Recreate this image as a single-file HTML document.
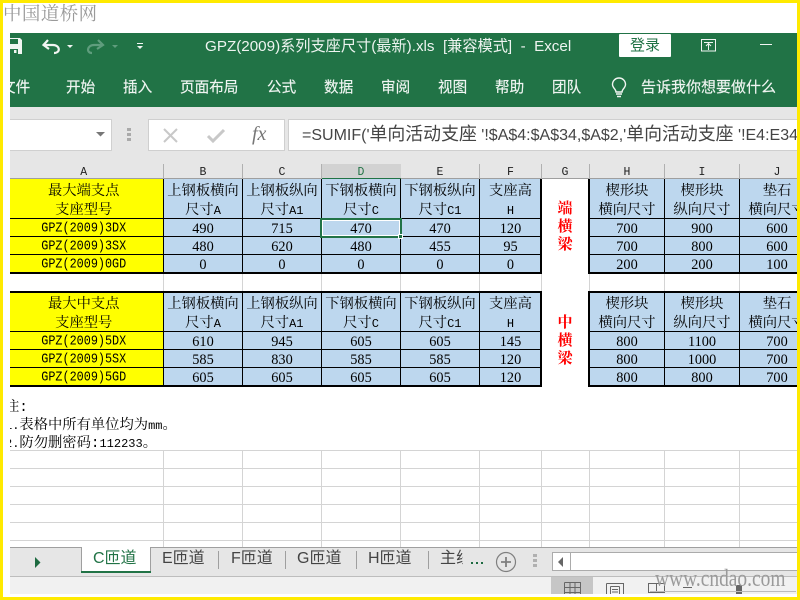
<!DOCTYPE html>
<html lang="zh"><head><meta charset="utf-8"><title>GPZ</title>
<style>
html,body{margin:0;padding:0;background:#fff}
#root{position:relative;width:800px;height:600px;overflow:hidden;background:#fff}
.b{position:absolute}
#clip{position:absolute;left:10px;top:33px;width:787px;height:561px;overflow:hidden;background:#fff}
#p{position:absolute;left:-10px;top:-33px;width:800px;height:600px}
.s{font-family:"Liberation Sans","Noto Sans CJK SC",sans-serif;white-space:pre;position:absolute}
.t{position:absolute;font-family:"Liberation Mono","Noto Serif CJK SC",serif;color:#000;text-align:center;white-space:nowrap}
.t i{font-style:normal;font-size:12px}
.h{font-size:14.3px;line-height:18.5px}
.n{font:14.3px/18px "Liberation Serif",serif;height:18px;padding-top:1px}
.n.a{font:11.8px/16px "Liberation Mono",serif;transform:scaleY(1.15);padding-top:1px}
.rb{color:#f0f5f2;font-size:14.6px;top:77px;line-height:22px;-webkit-text-stroke:.15px #f0f5f2}
.a{left:4px;width:159.5px}.c2{left:164px;width:78px}.c3{left:243px;width:78px}.c4{left:322px;width:78px}.c5{left:401px;width:78px}
.c6{left:480px;width:61px}.c7{left:542px;width:46px}.c8{left:590px;width:74px}.c9{left:665px;width:74px}.c10{left:740px;width:74px}
.hd{position:absolute;top:164px;height:15px;line-height:17px;font:11.5px/17px "Liberation Mono",serif;color:#222;text-align:center}
.tab{font-size:16px;color:#444;top:547px;line-height:24px}
.g{background:#d4d4d4;position:absolute}
.k{background:#000;position:absolute}
.f{font-size:17.9px}
.red{font-size:15px;line-height:18px;font-weight:bold;color:#f00}
</style></head>
<body><div id="root">

<div class="s" style="left:3px;top:1px;font-family:'Noto Serif CJK SC',serif;font-size:18.5px;letter-spacing:.4px;line-height:24px;color:#9a9a9a">中国道桥网</div>

<div id="clip"><div id="p">
<!-- title & ribbon -->
<div class="b" style="left:0;top:33px;width:800px;height:74px;background:#217346"></div>
<svg class="b" style="left:0;top:33px" width="170" height="32" viewBox="0 33 170 32">
<path d="M4 38H20L22 40V54H4Z" fill="#f1f5f2"/><rect x="9" y="39" width="9" height="5" fill="#217346"/><rect x="9" y="49" width="9" height="5" fill="#217346"/><rect x="14" y="50" width="2.5" height="3" fill="#f1f5f2"/>
<path d="M48 40 L43.5 45 L49 49" fill="none" stroke="#f1f5f2" stroke-width="2.2"/><path d="M44 45 H53 C60 45 61 53 54 53" fill="none" stroke="#f1f5f2" stroke-width="2.2"/>
<path d="M67 45H73L70 48Z" fill="#f1f5f2"/>
<path d="M98 40 L103 45 L97 49" fill="none" stroke="#5f9d7d" stroke-width="2.2"/><path d="M102 45 H94 C87 45 86 53 92 53" fill="none" stroke="#5f9d7d" stroke-width="2.2"/>
<path d="M112 45H118L115 48Z" fill="#5f9d7d"/>
<rect x="137" y="43" width="6" height="1" fill="#f1f5f2"/><path d="M137 46H143L140 49Z" fill="#f1f5f2"/>
</svg>
<div class="s" style="left:205px;top:36px;font-size:15.2px;line-height:22px;color:#eef4f0">GPZ(2009)系列支座尺寸(最新).xls  [兼容模式]  -  Excel</div>
<div class="b" style="left:619px;top:34px;width:52px;height:23px;background:#fff;border-radius:1px"></div>
<div class="s" style="left:630px;top:35px;font-size:15px;line-height:22px;color:#217346">登录</div>
<svg class="b" style="left:700px;top:38px" width="18" height="15"><rect x="1.5" y="1.5" width="14" height="11.5" fill="none" stroke="#f1f5f2"/><path d="M4 4.5H13M8.5 12V5.5M6 8L8.5 5.5L11 8" fill="none" stroke="#f1f5f2"/></svg>
<div class="b" style="left:760px;top:44px;width:12px;height:1px;background:#f1f5f2"></div>

<div class="s rb" style="left:1px">文件</div>
<div class="s rb" style="left:66px">开始</div>
<div class="s rb" style="left:123px">插入</div>
<div class="s rb" style="left:180px">页面布局</div>
<div class="s rb" style="left:267px">公式</div>
<div class="s rb" style="left:324px">数据</div>
<div class="s rb" style="left:381px">审阅</div>
<div class="s rb" style="left:438px">视图</div>
<div class="s rb" style="left:495px">帮助</div>
<div class="s rb" style="left:552px">团队</div>
<svg class="b" style="left:610px;top:77px" width="18" height="22"><path d="M6 15C6 12 2.5 11 2.5 7.5A6.5 6.5 0 0 1 15.5 7.5C15.5 11 12 12 12 15Z" fill="none" stroke="#f1f5f2" stroke-width="1.4"/><path d="M6 17H12M7 19.5H11" stroke="#f1f5f2" stroke-width="1.6"/></svg>
<div class="s rb" style="left:641px;top:77px;font-size:15px">告诉我你想要做什么</div>

<!-- formula bar -->
<div class="b" style="left:0;top:107px;width:800px;height:57px;background:#e6e6e6"></div>
<div class="b" style="left:0;top:119px;width:110px;height:30px;background:#fff;border:1px solid #d0d0d0"></div>
<svg class="b" style="left:95px;top:130px" width="12" height="8"><path d="M1 2H10L5.500 6.500Z" fill="#777"/></svg>
<div class="b" style="left:127px;top:128px;width:4px;height:3px;background:#aaa"></div>
<div class="b" style="left:127px;top:133px;width:4px;height:3px;background:#aaa"></div>
<div class="b" style="left:127px;top:138px;width:4px;height:3px;background:#aaa"></div>
<div class="b" style="left:148px;top:119px;width:135px;height:30px;background:#fff;border:1px solid #cfcfcf"></div>
<svg class="b" style="left:160px;top:125px" width="120" height="20"><path d="M4 4L17 17M17 4L4 17" stroke="#c8c8c8" stroke-width="2"/><path d="M48 11L53 16L64 5" fill="none" stroke="#c8c8c8" stroke-width="3"/></svg>
<div class="s" style="left:252px;top:122px;font:italic 20px/24px 'Liberation Serif',serif;color:#777">fx</div>
<div class="b" style="left:288px;top:119px;width:520px;height:30px;background:#fff;border:1px solid #cfcfcf"></div>
<div class="s" style="left:302px;top:123px;font-size:16px;line-height:22px;color:#444">=SUMIF('<span class="f">单向活动支座</span> '!$A$4:$A$34,$A$2,'<span class="f">单向活动支座</span> '!E4:E34</div>

<!-- column headers -->
<div class="b" style="left:0;top:164px;width:800px;height:15px;background:#e6e6e6"></div>
<div class="b" style="left:322px;top:164px;width:79px;height:15px;background:#d2d2d2"></div>
<div class="b" style="left:0;top:178px;width:800px;height:1px;background:#9f9f9f"></div>
<div class="b" style="left:322px;top:178px;width:79px;height:1px;background:#217346"></div>
<div class="b" style="left:163px;top:164px;width:1px;height:15px;background:#b0b0b0"></div>
<div class="b" style="left:242px;top:164px;width:1px;height:15px;background:#b0b0b0"></div>
<div class="b" style="left:321px;top:164px;width:1px;height:15px;background:#b0b0b0"></div>
<div class="b" style="left:479px;top:164px;width:1px;height:15px;background:#b0b0b0"></div>
<div class="b" style="left:541px;top:164px;width:1px;height:15px;background:#b0b0b0"></div>
<div class="b" style="left:589px;top:164px;width:1px;height:15px;background:#b0b0b0"></div>
<div class="b" style="left:664px;top:164px;width:1px;height:15px;background:#b0b0b0"></div>
<div class="b" style="left:739px;top:164px;width:1px;height:15px;background:#b0b0b0"></div>
<div class="hd a">A</div><div class="hd c2">B</div><div class="hd c3">C</div><div class="hd c4" style="color:#217346">D</div><div class="hd c5">E</div><div class="hd c6">F</div><div class="hd c7">G</div><div class="hd c8">H</div><div class="hd c9">I</div><div class="hd c10">J</div>

<!-- gridlines -->
<div class="g" style="left:163px;top:273px;width:1px;height:19px"></div><div class="g" style="left:242px;top:273px;width:1px;height:19px"></div><div class="g" style="left:321px;top:273px;width:1px;height:19px"></div><div class="g" style="left:400px;top:273px;width:1px;height:19px"></div><div class="g" style="left:479px;top:273px;width:1px;height:19px"></div><div class="g" style="left:541px;top:273px;width:1px;height:19px"></div><div class="g" style="left:589px;top:273px;width:1px;height:19px"></div><div class="g" style="left:664px;top:273px;width:1px;height:19px"></div><div class="g" style="left:739px;top:273px;width:1px;height:19px"></div>
<div class="g" style="left:163px;top:450px;width:1px;height:97px"></div><div class="g" style="left:242px;top:450px;width:1px;height:97px"></div><div class="g" style="left:321px;top:450px;width:1px;height:97px"></div><div class="g" style="left:400px;top:450px;width:1px;height:97px"></div><div class="g" style="left:479px;top:450px;width:1px;height:97px"></div><div class="g" style="left:541px;top:450px;width:1px;height:97px"></div><div class="g" style="left:589px;top:450px;width:1px;height:97px"></div><div class="g" style="left:664px;top:450px;width:1px;height:97px"></div><div class="g" style="left:739px;top:450px;width:1px;height:97px"></div>
<div class="g" style="left:0;top:450px;width:800px;height:1px"></div>
<div class="g" style="left:0;top:468px;width:800px;height:1px"></div>
<div class="g" style="left:0;top:486px;width:800px;height:1px"></div>
<div class="g" style="left:0;top:504px;width:800px;height:1px"></div>
<div class="g" style="left:0;top:522px;width:800px;height:1px"></div>
<div class="g" style="left:0;top:540px;width:800px;height:1px"></div>

<!-- fills -->
<div class="b" style="left:0;top:179px;width:163px;height:93px;background:#ff0"></div>
<div class="b" style="left:163px;top:179px;width:378px;height:93px;background:#bdd7ee"></div>
<div class="b" style="left:590px;top:179px;width:220px;height:93px;background:#bdd7ee"></div>
<div class="b" style="left:0;top:292px;width:163px;height:93px;background:#ff0"></div>
<div class="b" style="left:163px;top:292px;width:378px;height:93px;background:#bdd7ee"></div>
<div class="b" style="left:590px;top:292px;width:220px;height:93px;background:#bdd7ee"></div>

<!-- black lines table 1 -->
<div class="k" style="left:0;top:218px;width:541px;height:1px"></div><div class="k" style="left:589px;top:218px;width:220px;height:1px"></div>
<div class="k" style="left:0;top:236px;width:541px;height:1px"></div><div class="k" style="left:589px;top:236px;width:220px;height:1px"></div>
<div class="k" style="left:0;top:254px;width:541px;height:1px"></div><div class="k" style="left:589px;top:254px;width:220px;height:1px"></div>
<div class="k" style="left:0;top:272px;width:542px;height:2px"></div><div class="k" style="left:588px;top:272px;width:220px;height:2px"></div>
<div class="k" style="left:163px;top:179px;width:1px;height:94px"></div><div class="k" style="left:242px;top:179px;width:1px;height:94px"></div><div class="k" style="left:321px;top:179px;width:1px;height:94px"></div><div class="k" style="left:400px;top:179px;width:1px;height:94px"></div><div class="k" style="left:479px;top:179px;width:1px;height:94px"></div>
<div class="k" style="left:540px;top:179px;width:2px;height:95px"></div><div class="k" style="left:588px;top:179px;width:2px;height:95px"></div><div class="k" style="left:664px;top:179px;width:1px;height:94px"></div><div class="k" style="left:739px;top:179px;width:1px;height:94px"></div>
<!-- black lines table 2 -->
<div class="k" style="left:0;top:291px;width:542px;height:2px"></div><div class="k" style="left:588px;top:291px;width:220px;height:2px"></div>
<div class="k" style="left:0;top:331px;width:541px;height:1px"></div><div class="k" style="left:589px;top:331px;width:220px;height:1px"></div>
<div class="k" style="left:0;top:349px;width:541px;height:1px"></div><div class="k" style="left:589px;top:349px;width:220px;height:1px"></div>
<div class="k" style="left:0;top:367px;width:541px;height:1px"></div><div class="k" style="left:589px;top:367px;width:220px;height:1px"></div>
<div class="k" style="left:0;top:385px;width:542px;height:2px"></div><div class="k" style="left:588px;top:385px;width:220px;height:2px"></div>
<div class="k" style="left:163px;top:292px;width:1px;height:94px"></div><div class="k" style="left:242px;top:292px;width:1px;height:94px"></div><div class="k" style="left:321px;top:292px;width:1px;height:94px"></div><div class="k" style="left:400px;top:292px;width:1px;height:94px"></div><div class="k" style="left:479px;top:292px;width:1px;height:94px"></div>
<div class="k" style="left:540px;top:291px;width:2px;height:96px"></div><div class="k" style="left:588px;top:291px;width:2px;height:96px"></div><div class="k" style="left:664px;top:292px;width:1px;height:94px"></div><div class="k" style="left:739px;top:292px;width:1px;height:94px"></div>

<!-- table 1 text -->
<div class="t h a" style="top:183px">最大端支点<br>支座型号</div>
<div class="t h c2" style="top:183px">上钢板横向<br>尺寸<i>A</i></div>
<div class="t h c3" style="top:183px">上钢板纵向<br>尺寸<i>A1</i></div>
<div class="t h c4" style="top:183px">下钢板横向<br>尺寸<i>C</i></div>
<div class="t h c5" style="top:183px">下钢板纵向<br>尺寸<i>C1</i></div>
<div class="t h c6" style="top:183px">支座高<br><i>H</i></div>
<div class="t h c8" style="top:183px">楔形块<br>横向尺寸</div>
<div class="t h c9" style="top:183px">楔形块<br>纵向尺寸</div>
<div class="t h c10" style="top:183px">垫石<br>横向尺寸</div>
<div class="t c7 red" style="top:201px">端<br>横<br>梁</div>

<div class="t n a" style="top:219px">GPZ(2009)3DX</div><div class="t n c2" style="top:219px">490</div><div class="t n c3" style="top:219px">715</div><div class="t n c4" style="top:219px">470</div><div class="t n c5" style="top:219px">470</div><div class="t n c6" style="top:219px">120</div><div class="t n c8" style="top:219px">700</div><div class="t n c9" style="top:219px">900</div><div class="t n c10" style="top:219px">600</div>
<div class="t n a" style="top:237px">GPZ(2009)3SX</div><div class="t n c2" style="top:237px">480</div><div class="t n c3" style="top:237px">620</div><div class="t n c4" style="top:237px">480</div><div class="t n c5" style="top:237px">455</div><div class="t n c6" style="top:237px">95</div><div class="t n c8" style="top:237px">700</div><div class="t n c9" style="top:237px">800</div><div class="t n c10" style="top:237px">600</div>
<div class="t n a" style="top:255px">GPZ(2009)0GD</div><div class="t n c2" style="top:255px">0</div><div class="t n c3" style="top:255px">0</div><div class="t n c4" style="top:255px">0</div><div class="t n c5" style="top:255px">0</div><div class="t n c6" style="top:255px">0</div><div class="t n c8" style="top:255px">200</div><div class="t n c9" style="top:255px">200</div><div class="t n c10" style="top:255px">100</div>

<!-- selection -->
<div class="b" style="left:320px;top:218px;width:78px;height:16px;border:2px solid #217346;box-shadow:inset 0 0 0 1px #fff"></div>
<div class="b" style="left:398px;top:234px;width:5px;height:5px;background:#217346;border:1px solid #fff;box-sizing:border-box"></div>

<!-- table 2 text -->
<div class="t h a" style="top:296px">最大中支点<br>支座型号</div>
<div class="t h c2" style="top:296px">上钢板横向<br>尺寸<i>A</i></div>
<div class="t h c3" style="top:296px">上钢板纵向<br>尺寸<i>A1</i></div>
<div class="t h c4" style="top:296px">下钢板横向<br>尺寸<i>C</i></div>
<div class="t h c5" style="top:296px">下钢板纵向<br>尺寸<i>C1</i></div>
<div class="t h c6" style="top:296px">支座高<br><i>H</i></div>
<div class="t h c8" style="top:296px">楔形块<br>横向尺寸</div>
<div class="t h c9" style="top:296px">楔形块<br>纵向尺寸</div>
<div class="t h c10" style="top:296px">垫石<br>横向尺寸</div>
<div class="t c7 red" style="top:315px">中<br>横<br>梁</div>

<div class="t n a" style="top:332px">GPZ(2009)5DX</div><div class="t n c2" style="top:332px">610</div><div class="t n c3" style="top:332px">945</div><div class="t n c4" style="top:332px">605</div><div class="t n c5" style="top:332px">605</div><div class="t n c6" style="top:332px">145</div><div class="t n c8" style="top:332px">800</div><div class="t n c9" style="top:332px">1100</div><div class="t n c10" style="top:332px">700</div>
<div class="t n a" style="top:350px">GPZ(2009)5SX</div><div class="t n c2" style="top:350px">585</div><div class="t n c3" style="top:350px">830</div><div class="t n c4" style="top:350px">585</div><div class="t n c5" style="top:350px">585</div><div class="t n c6" style="top:350px">120</div><div class="t n c8" style="top:350px">800</div><div class="t n c9" style="top:350px">1000</div><div class="t n c10" style="top:350px">700</div>
<div class="t n a" style="top:368px">GPZ(2009)5GD</div><div class="t n c2" style="top:368px">605</div><div class="t n c3" style="top:368px">605</div><div class="t n c4" style="top:368px">605</div><div class="t n c5" style="top:368px">605</div><div class="t n c6" style="top:368px">120</div><div class="t n c8" style="top:368px">800</div><div class="t n c9" style="top:368px">800</div><div class="t n c10" style="top:368px">700</div>

<!-- notes -->
<div class="t" style="left:5px;top:399px;font-size:14.300px;line-height:18.200px;text-align:left">注:<br><i>1.</i>表格中所有单位均为<i>mm</i>。<br><i>2.</i>防勿删密码:<i>112233</i>。</div>

<!-- tab bar -->
<div class="b" style="left:0;top:547px;width:800px;height:30px;background:#e6e6e6"></div>
<div class="b" style="left:0;top:547px;width:800px;height:1px;background:#9f9f9f"></div>
<div class="b" style="left:0;top:576px;width:800px;height:1px;background:#bdbdbd"></div>
<div class="b" style="left:81px;top:547px;width:70px;height:26px;background:#fff;border-left:1px solid #9f9f9f;border-right:1px solid #9f9f9f;box-sizing:border-box"></div>
<div class="b" style="left:81px;top:571px;width:70px;height:2px;background:#217346"></div>
<svg class="b" style="left:34px;top:556px" width="8" height="13"><path d="M1 1L6.500 6.500L1 12Z" fill="#1e6b41"/></svg>
<div class="s tab" style="left:93px;color:#217346">C匝道</div>
<div class="s tab" style="left:162px">E匝道</div>
<div class="s tab" style="left:231px">F匝道</div>
<div class="s tab" style="left:297px">G匝道</div>
<div class="s tab" style="left:368px">H匝道</div>
<div class="s tab" style="left:440px;width:23px;overflow:hidden">主线</div>
<div class="b" style="left:218px;top:551px;width:1px;height:18px;background:#9f9f9f"></div>
<div class="b" style="left:285px;top:551px;width:1px;height:18px;background:#9f9f9f"></div>
<div class="b" style="left:356px;top:551px;width:1px;height:18px;background:#9f9f9f"></div>
<div class="b" style="left:428px;top:551px;width:1px;height:18px;background:#9f9f9f"></div>
<div class="b" style="left:471px;top:562px;width:2px;height:2px;background:#1e6b41"></div>
<div class="b" style="left:476px;top:562px;width:2px;height:2px;background:#1e6b41"></div>
<div class="b" style="left:481px;top:562px;width:2px;height:2px;background:#1e6b41"></div>
<svg class="b" style="left:495px;top:551px" width="22" height="22"><circle cx="11" cy="11" r="9.500" fill="none" stroke="#7f7f7f" stroke-width="1.200"/><path d="M6 11H16M11 6V16" stroke="#7f7f7f" stroke-width="1.800"/></svg>
<div class="b" style="left:533px;top:554px;width:4px;height:3px;background:#b0b0b0"></div>
<div class="b" style="left:533px;top:559px;width:4px;height:3px;background:#b0b0b0"></div>
<div class="b" style="left:533px;top:564px;width:4px;height:3px;background:#b0b0b0"></div>
<div class="b" style="left:552px;top:552px;width:260px;height:17px;background:#fff;border:1px solid #ababab"></div>
<div class="b" style="left:570px;top:552px;width:1px;height:19px;background:#ababab"></div>
<svg class="b" style="left:557px;top:556px" width="8" height="12"><path d="M6 1V11L1 6Z" fill="#666"/></svg>

<!-- status bar -->
<div class="b" style="left:0;top:577px;width:800px;height:17px;background:#f1f1f1"></div>
<div class="b" style="left:551px;top:577px;width:42px;height:17px;background:#c6c6c6"></div>
<svg class="b" style="left:551px;top:577px" width="200" height="17"><path d="M13.500 5.500H29.500V17M13.500 5.500V17M13.500 10.500H29.500M13.500 15.500H29.500M19 5.500V17M24 5.500V17" fill="none" stroke="#666"/><path d="M55.500 6.500H72.500V17M55.500 6.500V17M59.500 9.500V17M68.500 9.500V17M59.500 9.500H68.500M61 12.500H67M61 15H67" fill="none" stroke="#666"/><path d="M97.500 6.500H113.500V15.500H97.500ZM105.500 6.500V15.500" fill="none" stroke="#666"/></svg>
<div class="b" style="left:683px;top:587px;width:9px;height:1px;background:#666"></div>
<div class="b" style="left:736px;top:585px;width:6px;height:9px;background:#666"></div>
</div></div>

<div class="s" style="left:655px;top:565px;font-family:'Liberation Serif',serif;font-size:24px;line-height:28px;color:#9a9a9a;transform-origin:left top;transform:scaleX(.81)">www.cndao.com</div>
<div class="b" style="left:650px;top:591px;width:146px;height:1px;background:#bbb"></div>

<div class="b" style="left:0;top:0;width:800px;height:3px;background:#ffea00"></div>
<div class="b" style="left:0;top:597px;width:800px;height:3px;background:#ffea00"></div>
<div class="b" style="left:0;top:0;width:3px;height:600px;background:#ffea00"></div>
<div class="b" style="left:797px;top:0;width:3px;height:600px;background:#ffea00"></div>
</div></body></html>
